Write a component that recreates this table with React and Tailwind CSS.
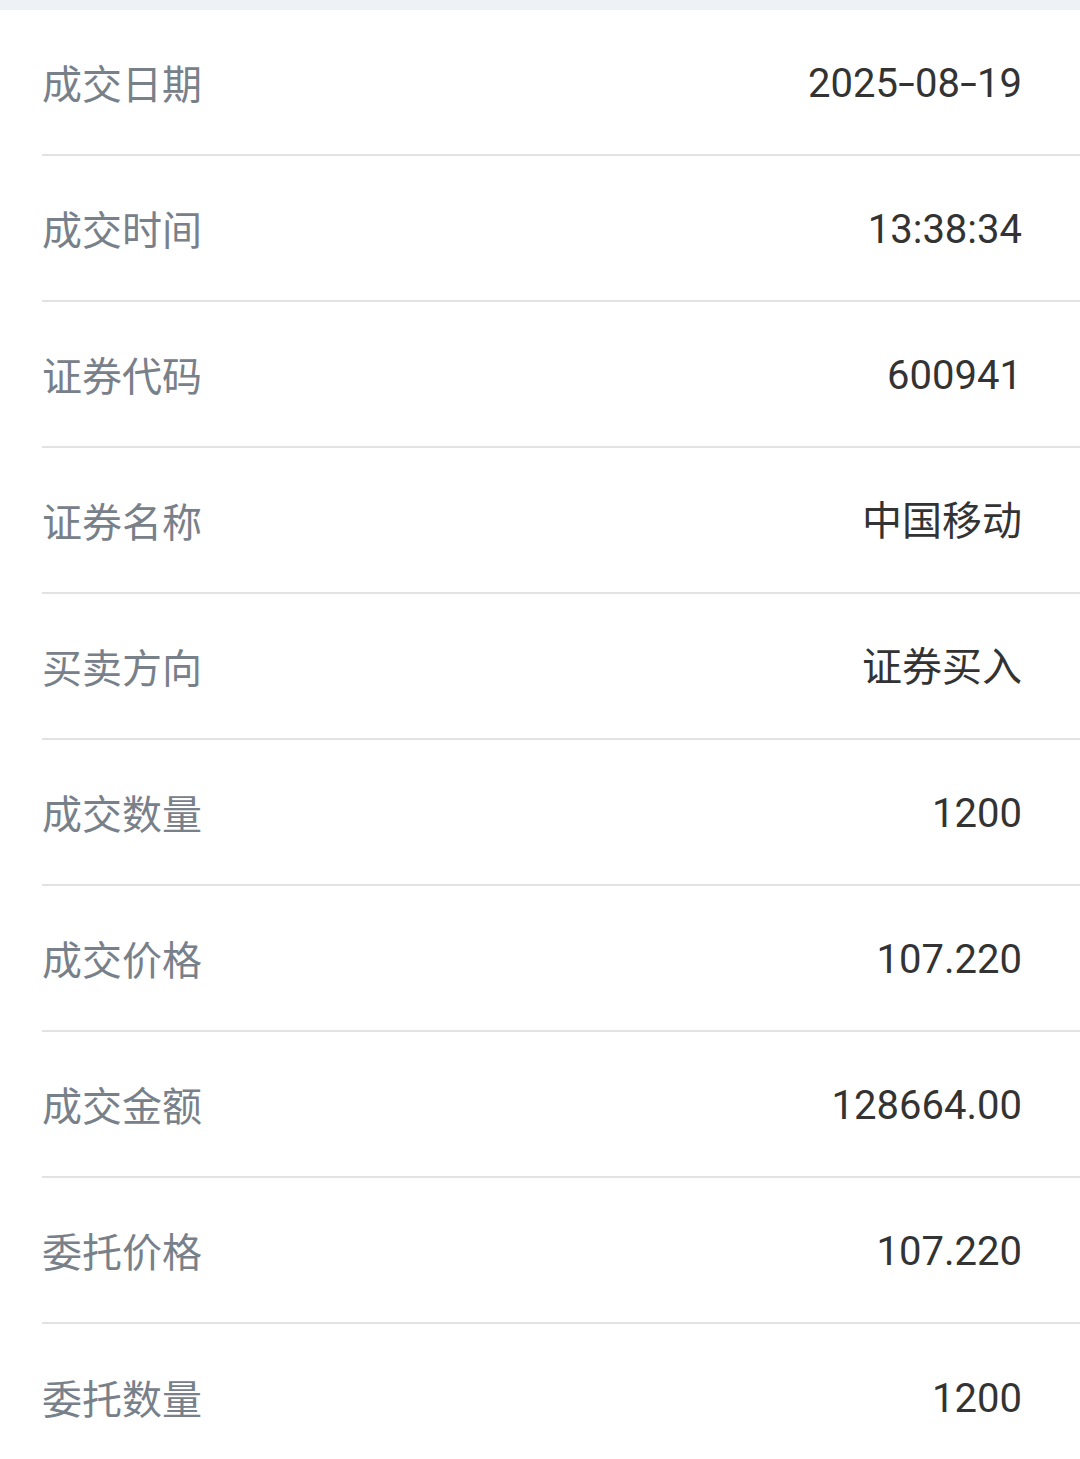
const rows = [
  ['成交日期', '2025-08-19'],
  ['成交时间', '13:38:34'],
  ['证券代码', '600941'],
  ['证券名称', '中国移动'],
  ['买卖方向', '证券买入'],
  ['成交数量', '1200'],
  ['成交价格', '107.220'],
  ['成交金额', '128664.00'],
  ['委托价格', '107.220'],
  ['委托数量', '1200'],
];

// the app font draws a wider dash than Roboto, so stretch it a little
function Value({ text }) {
  const parts = text.split('-');
  return (
    <span className="pt-[4px] text-[40px] leading-none text-[#333333]">
      {parts.map((p, i) => (
        <span key={i}>
          {i > 0 && <span className="inline-block mx-[3px] scale-x-150">-</span>}
          {p}
        </span>
      ))}
    </span>
  );
}

export default function App() {
  return (
    <div className="w-[1080px] h-[1459px] overflow-hidden bg-white font-['Roboto','Noto_Sans_CJK_SC',sans-serif]">
      {/* top strip */}
      <div className="h-[10px] bg-[#eef1f5]" />

      <div className="pl-[42px]">
        {rows.map(([label, value], i) => (
          <div
            key={i}
            className={`flex h-[146px] items-center justify-between pr-[58px] ${
              i < rows.length - 1 ? 'border-b-2 border-[#e2e2e2]' : ''
            }`}
          >
            <span className="text-[40px] leading-none text-[#78808a] font-['Noto_Sans_CJK_SC',sans-serif]">
              {label}
            </span>
            <Value text={value} />
          </div>
        ))}
      </div>
    </div>
  );
}
